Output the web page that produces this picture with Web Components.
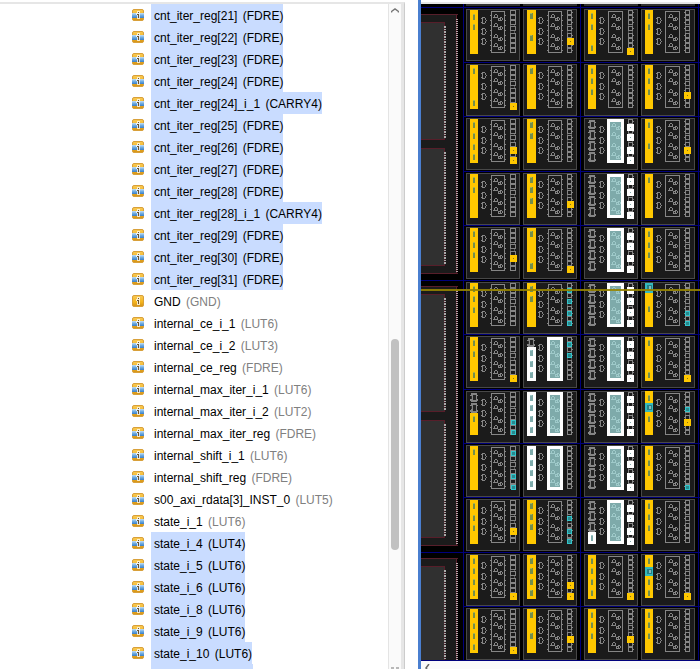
<!DOCTYPE html>
<html lang="en">
<head>
<meta charset="utf-8">
<title>Netlist and Device</title>
<style>
html,body{margin:0;height:100%;background:#fff;font-family:"Liberation Sans",Arial,sans-serif}
</style>
</head>
<body>
<eda-workspace>
  <netlist-panel slot="netlist"></netlist-panel>
  <device-panel slot="device"></device-panel>
</eda-workspace>
<script>
class EdaWorkspace extends HTMLElement{
  constructor(){
    super();
    this.attachShadow({mode:'open'}).innerHTML=`<style>
      :host{display:grid;grid-template-columns:minmax(0,418fr) 3px minmax(0,279fr);height:100vh;overflow:hidden;background:#fff}
      .splitter{background:#4a7fd0}
      ::slotted(*){min-width:0;min-height:0}
    </style><slot name="netlist"></slot><div class="splitter"></div><slot name="device"></slot>`;
  }
}
class CellIcon extends HTMLElement{
  connectedCallback(){
    const band=this.hasAttribute('plain')?'':'<rect y="4" width="12" height="5" fill="url(#b)"/>';
    this.attachShadow({mode:'open'}).innerHTML=`<style>:host{display:block;width:12px;height:12px}svg{display:block}</style>
    <svg width="12" height="12" aria-hidden="true"><defs><linearGradient id="g" x2="0" y2="1"><stop stop-color="#f8ca58"/><stop offset=".6" stop-color="#f5b51d"/><stop offset="1" stop-color="#d0901a"/></linearGradient><linearGradient id="b" x2="0" y2="1"><stop stop-color="#c4dff5"/><stop offset=".5" stop-color="#6fabe0"/><stop offset="1" stop-color="#3a7ec8"/></linearGradient></defs>
    <rect x=".5" y=".5" width="11" height="11" rx="1.5" fill="url(#g)" stroke="#d8a03a"/>${band}
    <path d="M4 4h4v6H5V6H4zM5 2h3v2H5z" fill="#fff" opacity=".75"/><path d="M5 5h2v4H6V6H5zM6 3h1v1H6z" fill="#6b5330"/></svg>`;
  }
}
class NetlistRow extends HTMLElement{
  connectedCallback(){
    this.setAttribute('role','treeitem');
    this.attachShadow({mode:'open'}).innerHTML=`<style>
      :host{display:flex;align-items:center;height:22px;flex:none;padding-left:132px;gap:7px;font-size:12px;line-height:22px;color:#000}
      .label{padding:1px 0 0 3px;height:21px;white-space:pre}
      .type{color:#808080;margin-left:2px}
      :host([selected]) .label{background:#c9dcff}
      :host([selected]) .type{color:#000}
    </style><cell-icon ${this.hasAttribute('plain')?'plain':''}></cell-icon><span class="label"><slot></slot> <span class="type">${this.getAttribute('type')}</span></span>`;
  }
}
class ScrollRail extends HTMLElement{
  constructor(){
    super();
    this.attachShadow({mode:'open'}).innerHTML=`<style>
      :host{display:flex;flex-direction:column;width:12px;background:#fafafa;border-left:1px solid #e4e4e4}
      button{border:0;padding:0;background:none;height:13px;flex:none;display:block}
      svg{display:block;margin:auto}
      .track{flex:1;display:grid;grid-template-rows:322fr 210fr 114fr;justify-content:center}
      .thumb{grid-row:2;width:8px;border-radius:4px;background:#c1c1c1}
      .end{height:5px}
    </style><button aria-label="Scroll up"><svg width="8" height="5"><path d="M.5 4.5V3.5L4 1l3.500 2.500v1" fill="none" stroke="#777" stroke-width="1.500"/></svg></button>
    <div class="track"><div class="thumb"></div></div>
    <button class="end" aria-label="Scroll down"><svg width="8" height="5"><path d="M0 4h3M5 4h3" stroke="#777"/></svg></button>`;
  }
}
class NetlistPanel extends HTMLElement{
  constructor(){
    super();
    const rows=[];
    const add=(n,t,s,p)=>rows.push(`<netlist-row type="(${t})"${s?' selected':''}${p?' plain':''}>${n}</netlist-row>`);
    for(let i=21;i<=31;i++){
      add(`cnt_iter_reg[${i}]`,'FDRE',1);
      if(i===24||i===28)add(`cnt_iter_reg[${i}]_i_1`,'CARRY4',1);
    }
    add('GND','GND',0,1);
    [['internal_ce_i_1','LUT6'],['internal_ce_i_2','LUT3'],['internal_ce_reg','FDRE'],['internal_max_iter_i_1','LUT6'],['internal_max_iter_i_2','LUT2'],['internal_max_iter_reg','FDRE'],['internal_shift_i_1','LUT6'],['internal_shift_reg','FDRE'],['s00_axi_rdata[3]_INST_0','LUT5'],['state_i_1','LUT6']].forEach(r=>add(r[0],r[1]));
    [['state_i_4','LUT4'],['state_i_5','LUT6'],['state_i_6','LUT6'],['state_i_8','LUT6'],['state_i_9','LUT6'],['state_i_10','LUT6']].forEach(r=>add(r[0],r[1],1));
    this.attachShadow({mode:'open'}).innerHTML=`<style>
      :host{display:flex;padding:2px 13px 0 0;background:#fff}
      .frame{flex:1;min-width:0;display:flex;border-top:2px solid #e6e6e6;border-right:1px solid #ccc}
      .inner{flex:1;min-width:0;display:flex;border-right:3px solid #e6e6e6}
      .tree{flex:1;min-width:0;display:flex;flex-direction:column;overflow:hidden}
      .next{flex:1;width:102px;margin-left:151px;background:#c9dcff}
    </style><div class="frame"><div class="inner"><div class="tree" role="tree">${rows.join('')}<div class="next"></div></div><scroll-rail></scroll-rail></div></div>`;
  }
}

/* Each site: s = slot marks, y / w / t = yellow, white, teal flip-flops,
   k = bar segments [colour, top, bottom], c = carry chain placed. */
const FULL=[['y',1,45]],WB=[['w',1,45]],LC=[['g',2,11],['g',12,22],['g',23,33],['g',34,44]];
const SITES=[
 [{s:[5,15]},{s:[4,26],y:[29]},{s:[4,15,36],y:[39]},{s:[4,15]}],
 [{s:[4,36],y:[39]},{s:[4]},{s:[4,14,25]},{s:[4,14,25],y:[28]}],
 [{s:[4,15,26,36],y:[29,39]},{s:[4,15]},{k:LC,c:1,w:[6,16,29,39]},{s:[4,25],y:[29]}],
 [{s:[4,14]},{s:[4,14,25],y:[28]},{k:LC,c:1,w:[5,16,28,39]},{s:[4]}],
 [{s:[4,15,25],y:[28]},{s:[4,36],y:[39]},{k:LC,c:1,w:[6,16,28,39]},{s:[4,15,25]}],
 [{s:[4,14,25]},{s:[4,14],t:[6,17,29,39]},{k:LC,c:1,w:[5,16,27,38]},{k:[['t',1,11],['y',11,45]],s:[24],t:[29,39]}],
 [{s:[4,15,36],y:[39]},{k:[['g',2,11],['w',11,45]],s:[14,25,36],c:1,t:[6,17]},{k:LC,c:1,w:[5,16,28,39]},{s:[4,36],y:[39]}],
 [{k:[['g',2,11],['g',12,22],['y',22,44]],s:[25],t:[29,39]},{k:WB,s:[4,14,25,36],c:1},{k:LC,c:1,w:[5,15,28,38]},{k:[['y',0,12],['t',12,21],['y',21,44]],s:[4,25],t:[16],y:[28]}],
 [{s:[4],t:[6,29,40]},{k:WB,s:[4,15,25,36],c:1},{k:LC,c:1,w:[5,16,28,39]},{s:[4,15,25],t:[40]}],
 [{s:[4,16,26],y:[29]},{s:[4,15,25],t:[17,30,40]},{k:[...LC.slice(0,3),['w',33,45]],s:[36],c:1,w:[6,16,29,39]},{s:[4,15,26]}],
 [{s:[4,14,25,36],y:[39]},{s:[4,14,25,36],y:[28,39]},{s:[4,14,25,36],y:[39]},{k:[['y',1,13],['t',13,22],['y',22,44]],s:[4,25,36],y:[39]}],
 [{s:[4,15,25,36],y:[39]},{s:[4,25],y:[28]},{s:[4,14,25],y:[28]},{s:[4,14,25]}]
];
const COLX=[466,523,584,641],ROWY=[9,64,118,173,227,282,336,391,445,499,554,608];
const COLOR={y:'#ffc800',w:'#fff',t:'#33b9bf'};
const box=(x,y,w,h,f)=>`<rect x="${x}" y="${y}" width="${w}" height="${h}" fill="${f}"/>`;
const frame=(x,y,w,h,c,f='none')=>`<rect x="${x+.5}" y="${y+.5}" width="${w-1}" height="${h-1}" fill="${f}" stroke="${c}"/>`;
function site(x,y,col,d){
  const g='#858585';
  let o=frame(x,y,54,52,'#484848','#1b1b1b');
  const bw=col===1?9:8;
  for(const [k,a,b] of d.k||FULL){
    if(k==='g')o+=box(x+5,y+a,6,b-a,g)+box(x+4,y+a+2,8,1,g)+box(x+4,y+b-3,8,2,g)+box(x+7,y+a+2,3,b-a-4,'#242424')+box(x+5,y+a+3,1,3,'#333');
    else o+=box(x+4,y+a,bw,b-a,COLOR[k]);
    if(k==='t')o+=box(x+6,y+a+2,5,b-a-4,'#277f84')+box(x+8,y+a+3,2,b-a-6,'#8bb');
  }
  const white=(d.k||[]).some(k=>k[0]==='w');
  for(const s of d.s||[])o+=box(x+7,y+s,col===1?3:2,6,white?'#7fabab':'#748f4b')+box(x+7,y+s,2,1,white?'#9fcaca':'#a6b550');
  for(const q of [8,19,29])o+=`<path transform="translate(${x+15} ${y+q})" d="M1 0h3v1H1zM1 0h1v7H1zM0 1h1v1H0zM0 5h1v1H0zM1 6h3v1H1zM4 1h1v2H4zM5 3h1v1H5zM4 4h1v2H4z" fill="${g}"/>`;
  const wide=col>1;
  if(d.c)o+=box(x+(wide?23:24),y+1,wide?17:16,44,'#fff')+box(x+(wide?26:27),y+4,wide?11:10,38,'#7eaaaa');
  else{
    o+=frame(x+(wide?24:25),y+2,wide?15:14,42,g);
    if(!wide)for(let i=0;i<8;i++)o+=box(x+24,y+6+i*5,1,1,g)+box(x+39,y+6+i*5,1,1,g);
  }
  const gc=d.c?'#9fcaca':g;
  for(const q of [5,14,25,34])
    o+=`<path transform="translate(${x+27} ${y+q})" d="M0 3h5v1H0zM1 1h1v2H1zM2 0h2v1H2zM4 1h1v2H4zM5 4h2v1H5zM5 5h1v2H5zM6 6h3v1H6zM7 3h2v1H7zM9 4h1v2H9zM7 4h1v2H7z" fill="${gc}"/>`;
  const fx=x+44;
  o+=box(fx,y+1,1,43,'#555')+box(fx+4,y+1,1,43,'#555');
  for(const q of [1,6,11,17,24,29,34,39]){
    o+=frame(fx,y+q,col===0?6:5,5,g,'#1b1b1b')+box(col===3?fx-1:fx+5,y+q+2,1,1,g);
  }
  for(const k of ['y','w'])for(const q of d[k]||[])o+=box(x+(wide?43:44),y+q,7,7,COLOR[k])+box(x+(wide?46:47),y+q+3,1,1,k==='y'?'#866f20':'#7faaaa');
  const tx=col===0?fx+1:fx;
  for(const q of d.t||[])o+=box(tx,y+q,5,5,'#33c4ca')+box(tx+1,y+q+1,3,3,'#2a878c');
  return o;
}
function bank(y){
  const r='#571e2a';
  let o=box(421,y,36,259,'#1b1b1b')+box(421,y,37,1,r)+box(421,y+259,37,1,r)+box(456,y,1,259,r);
  o+=`<path d="M457 ${y+5}v254" stroke="#b5a5a8" stroke-width="2" stroke-dasharray="1 1"/>`;
  for(const a of [8,134])o+=box(421,y+a,24,117,'#303030')+box(421,y+a,24,1,r)+box(421,y+a+117,24,1,r)+box(444,y+a,1,117,r)+`<path d="M445 ${y+a+4}v113" stroke="#aaa" stroke-width="2" stroke-dasharray="2 1 1 1"/>`;
  return o;
}
class DeviceCanvas extends HTMLElement{
  constructor(){
    super();
    const blue='#00007c';
    let o=bank(14)+bank(286)+bank(558);
    for(const x of COLX)o+=box(x,4,54,2,'#333');
    for(const y of [7,280,552])o+=box(421,y,279,1,blue);
    for(const y of ROWY)o+=box(463,y-2,237,1,blue);
    o+=box(421,660,279,1,blue);
    for(const x of [463,580,698])o+=box(x,4,1,657,blue);
    ROWY.forEach((y,i)=>COLX.forEach((x,j)=>o+=site(x,y,j,SITES[i][j])));
    o+='<rect x="421" y="289" width="279" height="2" fill="#968400" opacity=".9"/>';
    this.attachShadow({mode:'open'}).innerHTML=`<style>:host{display:block;background:#000;overflow:hidden}svg{display:block;width:100%;height:100%}</style>
    <svg viewBox="421 4 279 657" preserveAspectRatio="xMinYMin slice" shape-rendering="crispEdges" role="img" aria-label="Device floorplan">${o}</svg>`;
  }
}
class DevicePanel extends HTMLElement{
  constructor(){
    super();
    this.attachShadow({mode:'open'}).innerHTML=`<style>
      :host{display:flex;flex-direction:column;padding-top:2px}
      device-canvas{flex:1;min-height:0;border-top:2px solid #e6e6e6}
      .foot{height:8px;background:#fafafa;overflow:hidden}
      button{display:block;border:0;background:none;padding:3px 0 0 4px}
      svg{display:block}
    </style><device-canvas></device-canvas><div class="foot"><button aria-label="Scroll left"><svg width="5" height="8"><path d="M4 0L1 4l3 4" fill="none" stroke="#666" stroke-width="1.500"/></svg></button></div>`;
  }
}
customElements.define('cell-icon',CellIcon);
customElements.define('netlist-row',NetlistRow);
customElements.define('scroll-rail',ScrollRail);
customElements.define('netlist-panel',NetlistPanel);
customElements.define('device-canvas',DeviceCanvas);
customElements.define('device-panel',DevicePanel);
customElements.define('eda-workspace',EdaWorkspace);
</script>
</body>
</html>
